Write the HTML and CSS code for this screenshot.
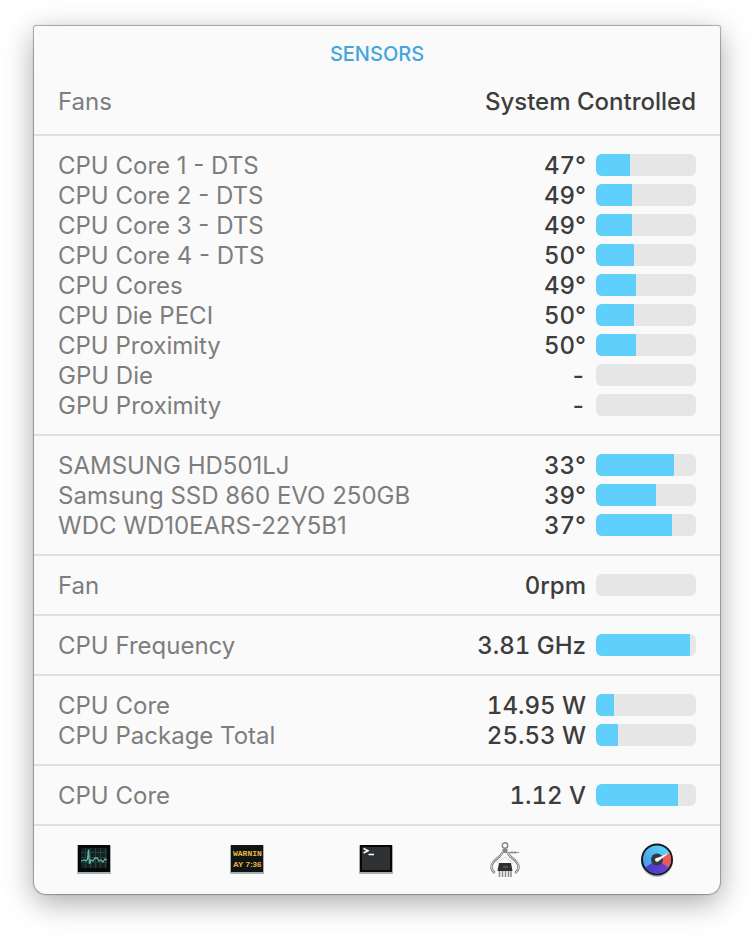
FILE: index.html
```html
<!DOCTYPE html>
<html lang="en">
  <head>
    <meta charset="UTF-8" />
    <meta name="viewport" content="width=device-width, initial-scale=1.0" />
    <title>Sensors</title>
    <link rel="stylesheet" href="styles.css">
  </head>
  <body>
    <main class="panel">
      <header class="header">
        <h1 class="title">SENSORS</h1>
        <div class="row">
          <span class="label">Fans</span>
          <span class="value">System Controlled</span>
        </div>
      </header>

      <ul class="section">
        <li class="row"><span class="label">CPU Core 1 - DTS</span><span class="value">47°</span><div class="bar"><div class="fill" style="width: 34%"></div></div></li>
        <li class="row"><span class="label">CPU Core 2 - DTS</span><span class="value">49°</span><div class="bar"><div class="fill" style="width: 36%"></div></div></li>
        <li class="row"><span class="label">CPU Core 3 - DTS</span><span class="value">49°</span><div class="bar"><div class="fill" style="width: 36%"></div></div></li>
        <li class="row"><span class="label">CPU Core 4 - DTS</span><span class="value">50°</span><div class="bar"><div class="fill" style="width: 38%"></div></div></li>
        <li class="row"><span class="label">CPU Cores</span><span class="value">49°</span><div class="bar"><div class="fill" style="width: 40%"></div></div></li>
        <li class="row"><span class="label">CPU Die PECI</span><span class="value">50°</span><div class="bar"><div class="fill" style="width: 38%"></div></div></li>
        <li class="row"><span class="label">CPU Proximity</span><span class="value">50°</span><div class="bar"><div class="fill" style="width: 40%"></div></div></li>
        <li class="row"><span class="label">GPU Die</span><span class="value">-</span><div class="bar"></div></li>
        <li class="row"><span class="label">GPU Proximity</span><span class="value">-</span><div class="bar"></div></li>
      </ul>

      <ul class="section">
        <li class="row"><span class="label">SAMSUNG HD501LJ</span><span class="value">33°</span><div class="bar"><div class="fill" style="width: 78%"></div></div></li>
        <li class="row"><span class="label">Samsung SSD 860 EVO 250GB</span><span class="value">39°</span><div class="bar"><div class="fill" style="width: 60%"></div></div></li>
        <li class="row"><span class="label">WDC WD10EARS-22Y5B1</span><span class="value">37°</span><div class="bar"><div class="fill" style="width: 76%"></div></div></li>
      </ul>

      <ul class="section">
        <li class="row"><span class="label">Fan</span><span class="value">0rpm</span><div class="bar"></div></li>
      </ul>

      <ul class="section">
        <li class="row"><span class="label">CPU Frequency</span><span class="value">3.81 GHz</span><div class="bar"><div class="fill" style="width: 94%"></div></div></li>
      </ul>

      <ul class="section">
        <li class="row"><span class="label">CPU Core</span><span class="value">14.95 W</span><div class="bar"><div class="fill" style="width: 18%"></div></div></li>
        <li class="row"><span class="label">CPU Package Total</span><span class="value">25.53 W</span><div class="bar"><div class="fill" style="width: 22%"></div></div></li>
      </ul>

      <ul class="section">
        <li class="row"><span class="label">CPU Core</span><span class="value">1.12 V</span><div class="bar"><div class="fill" style="width: 82%"></div></div></li>
      </ul>

      <footer class="dock">
        <button class="app" type="button" aria-label="Activity Monitor">
          <svg width="34" height="34" viewBox="0 0 34 34">
            <rect x="0" y="2" width="34" height="29" rx="1" fill="#a9adad" />
            <rect x="1" y="2" width="32" height="27" fill="#060909" />
            <rect x="4" y="5" width="26" height="20" fill="#14201f" />
            <path d="M4 9.500H30M4 14.500H30M4 19.500H30M8.500 5V25M13.500 5V25M18.500 5V25M23.500 5V25M28.500 5V25" stroke="#28514b" stroke-width="1" opacity=".7" />
            <path d="M4 18L7 17L9 18L10.500 16.500L11.500 6.500L12.500 21L14 17L16 18L18 15L20 15L22 18L24 17L26 19L28 16L30 17" fill="none" stroke="#65b8aa" stroke-width="1.300" />
          </svg>
        </button>

        <div class="dock-group">
          <button class="app" type="button" aria-label="Console">
            <svg width="34" height="34" viewBox="0 0 34 34">
              <rect x="0" y="2" width="34" height="29" rx="1" fill="#a9adad" />
              <rect x="1" y="2" width="32" height="27" fill="#111416" />
              <text class="led led-mono" x="3" y="13">WARNIN</text>
              <text class="led" x="3" y="24">AY 7:36</text>
            </svg>
          </button>
          <button class="app" type="button" aria-label="Terminal">
            <svg width="34" height="34" viewBox="0 0 34 34">
              <rect x="0" y="2" width="34" height="29" rx="1" fill="#a9adad" />
              <rect x="1" y="2" width="32" height="27" fill="#070707" />
              <rect x="3" y="4" width="28" height="23" fill="#303132" />
              <path d="M4.500 5.500L9 7.700L4.500 10M9.500 11.500H15" fill="none" stroke="#fff" stroke-width="1.500" />
            </svg>
          </button>
          <button class="app" type="button" aria-label="System Information">
            <svg width="34" height="34" viewBox="0 0 34 34" fill="none">
              <circle cx="17" cy="2.500" r="2.700" stroke="#858585" stroke-width="1.400" />
              <path d="M14.500 6H19.500V10H14.500Z" fill="#858585" />
              <path d="M20 9.500H31M24 8V11M27 8V11" stroke="#8b8b8b" stroke-width="1" />
              <path d="M14.500 9C13 15 3.500 17 3.500 24C3.500 27 5.500 29 7 30M19.500 9C21 15 30.500 17 30.500 24C30.500 27 28.500 29 27 30" stroke="#7d7d7d" stroke-width="2.400" />
              <path d="M14.500 9C13 15 3.500 17 3.500 24C3.500 27 5.500 29 7 30M19.500 9C21 15 30.500 17 30.500 24C30.500 27 28.500 29 27 30" stroke="#d8d8d8" stroke-width="1" />
              <path d="M9 20L17 14L25 20" stroke="#d5d5d5" stroke-width="1" />
              <path d="M11.500 27V34M14.500 27V34M17.500 27V34M20.500 27V34M23 27V34" stroke="#8b8b8b" stroke-width="1.500" />
              <path d="M11 20H23L24.500 28H9.500Z" fill="#303030" />
              <path d="M15 24H20" stroke="#777" stroke-width="1" />
            </svg>
          </button>
        </div>

        <button class="app" type="button" aria-label="iStat Menus">
          <svg width="34" height="34" viewBox="0 0 34 34">
            <defs>
              <linearGradient id="cool" x1="0" y1="1" x2="1" y2="0">
                <stop offset="0" stop-color="#3f8edf" />
                <stop offset="1" stop-color="#5fe0fa" />
              </linearGradient>
              <linearGradient id="violet" x1="0" y1="0" x2="1" y2="0">
                <stop offset="0" stop-color="#403bc5" />
                <stop offset="1" stop-color="#7340d0" />
              </linearGradient>
            </defs>
            <circle cx="17" cy="18" r="16" fill="#bdbdc4" />
            <circle cx="17" cy="16.500" r="16" fill="#15191e" />
            <circle cx="17" cy="16.500" r="14" fill="url(#cool)" />
            <path d="M17 16.500L29.500 10.100A14 14 0 0 1 28.500 24.500Z" fill="#ee585b" />
            <path d="M17 16.500L28.500 24.500A14 14 0 0 1 5.500 24.500Z" fill="url(#violet)" />
            <circle cx="17" cy="16.500" r="6" fill="#343942" />
            <path d="M16 15.500L29 10L18 18.500Z" fill="#fff" />
            <circle cx="17" cy="16.800" r="2" fill="#fff" />
          </svg>
        </button>
      </footer>
    </main>
  </body>
</html>
```

FILE: styles.css
```css
* {
  padding: 0;
  margin: 0;
  box-sizing: border-box;
}

body {
  padding: 26px 34px 42px;
  background-color: #fff;
  font-family: Inter, "Liberation Sans", sans-serif;
}

/*STRUCTURE*/
.panel {
  background-color: #fafafa;
  border-radius: 2px 2px 12px 12px;
  box-shadow: 0 0 1px 1px rgba(0, 0, 0, 0.3),
    0 8px 30px rgba(0, 0, 0, 0.35);
}

.header {
  padding: 12px 24px 18px;
}

.section {
  padding: 14px 24px;
  border-top: 2px solid #dfdfdf;
  list-style: none;
}

.row {
  display: flex;
  align-items: flex-start;
  height: 30px;
  font-size: 24px;
  line-height: 32px;
}

/*COMPONENTS*/
.title {
  margin-bottom: 16px;
  color: #44a5df;
  font-size: 20px;
  font-weight: 500;
  line-height: 32px;
  text-align: center;
}

.label {
  flex: 1;
  color: #7d7d7d;
}

.value {
  color: #3d3d3d;
  font-weight: 500;
  font-variant-numeric: tabular-nums;
}

.bar {
  width: 100px;
  height: 22px;
  margin: 4px 0 0 10px;
  overflow: hidden;
  background-color: #e6e6e6;
  border-radius: 6px;
}

.fill {
  height: 100%;
  background-color: #5fcffc;
}

.dock {
  display: flex;
  justify-content: space-between;
  align-items: center;
  height: 70px;
  padding: 0 46px 0 43px;
  border-top: 2px solid #dfdfdf;
}

.dock-group {
  display: flex;
  gap: 95px;
}

.app {
  width: 34px;
  height: 34px;
  border: none;
  background: none;
  cursor: pointer;
}

.app svg {
  display: block;
  overflow: visible;
}

.led {
  fill: #e5b83c;
  font-family: "Liberation Sans", sans-serif;
  font-size: 8px;
  font-weight: bold;
}

.led-mono {
  font-family: "Liberation Mono", monospace;
}
```
